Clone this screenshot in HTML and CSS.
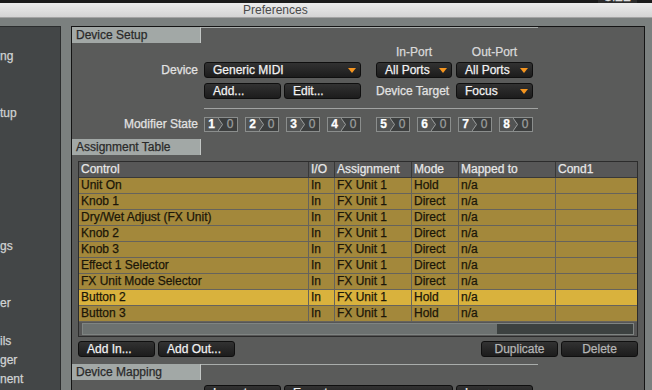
FILE: index.html
```html
<!DOCTYPE html>
<html>
<head>
<meta charset="utf-8">
<title>Preferences</title>
<link rel="stylesheet" href="styles.css">
</head>
<body>
<div class="topstrip"><span class="behind">SIZE</span></div>
<div class="titlebar">Preferences</div>
<div class="workspace">
  <nav class="sidebar">
    <div class="item">ng</div>
    <div class="item"></div>
    <div class="item"></div>
    <div class="item">tup</div>
    <div class="item"></div>
    <div class="item"></div>
    <div class="item"></div>
    <div class="item"></div>
    <div class="item"></div>
    <div class="item"></div>
    <div class="item">gs</div>
    <div class="item"></div>
    <div class="item"></div>
    <div class="item">er</div>
    <div class="item"></div>
    <div class="item">ils</div>
    <div class="item">ger</div>
    <div class="item">nent</div>
  </nav>
  <main class="panel">
    <div class="sec-head">
      <div class="sec-label">Device Setup</div>
      <div class="sec-line"></div>
    </div>
    <div class="ds">
      <div class="row ports">
        <span class="spacer-ports"></span>
        <span class="port w76">In-Port</span>
        <span class="port w77 ml4">Out-Port</span>
      </div>
      <div class="row r1">
        <span class="lbl">Device</span>
        <div class="dd w157">Generic MIDI<svg class="tri" viewBox="0 0 8 5"><polygon points="0,0 8,0 4,5"/></svg></div>
        <div class="dd w76 ml15">All Ports<svg class="tri" viewBox="0 0 8 5"><polygon points="0,0 8,0 4,5"/></svg></div>
        <div class="dd w77 ml4">All Ports<svg class="tri" viewBox="0 0 8 5"><polygon points="0,0 8,0 4,5"/></svg></div>
      </div>
      <div class="row r2">
        <span class="lbl"></span>
        <div class="btn w77">Add...</div>
        <div class="btn w77 ml3">Edit...</div>
        <span class="tlabel ml15">Device Target</span>
        <div class="dd w77 ml4">Focus<svg class="tri" viewBox="0 0 8 5"><polygon points="0,0 8,0 4,5"/></svg></div>
      </div>
      <div class="sep"></div>
      <div class="row r3">
        <span class="lbl">Modifier State</span>
        <div class="modgrp">
          <div class="mod"><span class="n">1</span><svg class="chev" viewBox="0 0 5 13"><polygon class="cf" points="0,0 0,13 5,6.5"/><polyline class="cs" points="0,0 4.5,6.5 0,13"/></svg><span class="v">0</span></div>
          <div class="mod"><span class="n">2</span><svg class="chev" viewBox="0 0 5 13"><polygon class="cf" points="0,0 0,13 5,6.5"/><polyline class="cs" points="0,0 4.5,6.5 0,13"/></svg><span class="v">0</span></div>
          <div class="mod"><span class="n">3</span><svg class="chev" viewBox="0 0 5 13"><polygon class="cf" points="0,0 0,13 5,6.5"/><polyline class="cs" points="0,0 4.5,6.5 0,13"/></svg><span class="v">0</span></div>
          <div class="mod"><span class="n">4</span><svg class="chev" viewBox="0 0 5 13"><polygon class="cf" points="0,0 0,13 5,6.5"/><polyline class="cs" points="0,0 4.5,6.5 0,13"/></svg><span class="v">0</span></div>
        </div>
        <div class="modgrp ml15">
          <div class="mod"><span class="n">5</span><svg class="chev" viewBox="0 0 5 13"><polygon class="cf" points="0,0 0,13 5,6.5"/><polyline class="cs" points="0,0 4.5,6.5 0,13"/></svg><span class="v">0</span></div>
          <div class="mod"><span class="n">6</span><svg class="chev" viewBox="0 0 5 13"><polygon class="cf" points="0,0 0,13 5,6.5"/><polyline class="cs" points="0,0 4.5,6.5 0,13"/></svg><span class="v">0</span></div>
          <div class="mod"><span class="n">7</span><svg class="chev" viewBox="0 0 5 13"><polygon class="cf" points="0,0 0,13 5,6.5"/><polyline class="cs" points="0,0 4.5,6.5 0,13"/></svg><span class="v">0</span></div>
          <div class="mod"><span class="n">8</span><svg class="chev" viewBox="0 0 5 13"><polygon class="cf" points="0,0 0,13 5,6.5"/><polyline class="cs" points="0,0 4.5,6.5 0,13"/></svg><span class="v">0</span></div>
        </div>
      </div>
    </div>

    <div class="sec-head at">
      <div class="sec-label">Assignment Table</div>
    </div>
    <div class="tbl">
      <div class="tr th"><div>Control</div><div>I/O</div><div>Assignment</div><div>Mode</div><div>Mapped to</div><div>Cond1</div></div>
      <div class="tr"><div>Unit On</div><div>In</div><div>FX Unit 1</div><div>Hold</div><div>n/a</div><div></div></div>
      <div class="tr"><div>Knob 1</div><div>In</div><div>FX Unit 1</div><div>Direct</div><div>n/a</div><div></div></div>
      <div class="tr"><div>Dry/Wet Adjust (FX Unit)</div><div>In</div><div>FX Unit 1</div><div>Direct</div><div>n/a</div><div></div></div>
      <div class="tr"><div>Knob 2</div><div>In</div><div>FX Unit 1</div><div>Direct</div><div>n/a</div><div></div></div>
      <div class="tr"><div>Knob 3</div><div>In</div><div>FX Unit 1</div><div>Direct</div><div>n/a</div><div></div></div>
      <div class="tr"><div>Effect 1 Selector</div><div>In</div><div>FX Unit 1</div><div>Direct</div><div>n/a</div><div></div></div>
      <div class="tr"><div>FX Unit Mode Selector</div><div>In</div><div>FX Unit 1</div><div>Direct</div><div>n/a</div><div></div></div>
      <div class="tr sel"><div>Button 2</div><div>In</div><div>FX Unit 1</div><div>Hold</div><div>n/a</div><div></div></div>
      <div class="tr"><div>Button 3</div><div>In</div><div>FX Unit 1</div><div>Hold</div><div>n/a</div><div></div></div>
      <div class="scroll"><div class="track"><div class="thumb"></div></div></div>
    </div>
    <div class="btns">
      <div class="grp"><div class="btn w77">Add In...</div><div class="btn w77">Add Out...</div></div>
      <div class="grp"><div class="btn w77 dim">Duplicate</div><div class="btn w77 dim">Delete</div></div>
    </div>

    <div class="sec-head dm">
      <div class="sec-label">Device Mapping</div>
      <div class="sec-line"></div>
    </div>
    <div class="dm-row">
      <div class="btn w77">Import</div>
      <div class="btn w169">Export</div>
      <div class="btn w77">Learn</div>
    </div>
  </main>
</div>
</body>
</html>
```
FILE: styles.css
```css
* { box-sizing: border-box; }
html, body {
  margin: 0;
  height: 390px;
  overflow: hidden;
}
body {
  width: 652px;
  background: #7b807f;
  font-family: "Liberation Sans", Arial, sans-serif;
  font-size: 12px;
  -webkit-text-stroke: 0.25px currentColor;
}

.topstrip {
  height: 3px;
  background: #1b1b1b;
  display: flex;
  justify-content: flex-end;
  padding-right: 15px;
  overflow: hidden;
}
.behind {
  width: 39px;
  background: #2c2c2c;
  color: #dedede;
  font-size: 12px;
  line-height: 12px;
  margin-top: -9px;
  padding-left: 6px;
  height: 12px;
}

.titlebar {
  height: 15px;
  background: linear-gradient(#ececec, #d4d4d4);
  border-bottom: 1px solid #a3a3a3;
  padding-left: 243px;
  color: #4a4a4a;
  line-height: 14px;
  font-size: 12px;
  -webkit-text-stroke: 0;
}

.workspace {
  display: flex;
  gap: 10px;
  padding-top: 8px;
  height: 374px;
}

.sidebar {
  width: 61px;
  flex: none;
  background: #434647;
  border-right: 1px solid #2b2d2e;
  border-top: 1px solid #2b2d2e;
  padding-top: 20px;
  overflow: hidden;
  color: #d0d3d3;
}
.item {
  height: 19px;
  line-height: 19px;
  white-space: nowrap;
}

.panel {
  width: 574px;
  flex: none;
  background: #5a5b5a;
  border: 1px solid #141414;
  border-bottom: 0;
}

.sec-head {
  display: flex;
  height: 16px;
}
.sec-label {
  width: 129px;
  background: #a2a8a6;
  border-right: 1px solid #c2c6c4;
  color: #2a2a2a;
  padding-left: 4px;
  line-height: 16px;
}
.sec-line {
  width: 337px;
  border-top: 1px solid #a9adab;
}

.ds { padding-top: 3px; }
.row {
  display: flex;
  align-items: center;
  height: 16px;
}
.ports {
  height: 12px;
  margin-bottom: 4px;
}
.spacer-ports { width: 304px; }
.port {
  color: #d9d9d9;
  text-align: center;
  line-height: 12px;
}
.r2 { margin-top: 5px; }
.sep {
  margin: 9px 0 0 132px;
  width: 334px;
  height: 1px;
  background: #a1a3a2;
}
.r3 { margin-top: 7px; }

.lbl {
  width: 126px;
  margin-right: 6px;
  text-align: right;
  color: #e2e2e2;
}
.tlabel {
  width: 76px;
  color: #e2e2e2;
  white-space: nowrap;
}

.w76 { width: 76px; }
.w77 { width: 77px; }
.w157 { width: 157px; }
.w169 { width: 169px; }
.ml3 { margin-left: 3px; }
.ml4 { margin-left: 4px; }
.ml15 { margin-left: 15px; }

.dd {
  height: 16px;
  display: flex;
  align-items: center;
  justify-content: space-between;
  border: 1px solid #0f0f0f;
  border-radius: 3px;
  background: linear-gradient(#323232, #1c1c1c);
  color: #f2f2f2;
  padding: 0 4px 0 8px;
  line-height: 14px;
  white-space: nowrap;
}
.tri {
  width: 8px;
  height: 5px;
  fill: #f5951f;
  flex: none;
}

.btn {
  height: 16px;
  border: 1px solid #0f0f0f;
  border-radius: 3px;
  background: linear-gradient(#323232, #1c1c1c);
  color: #f2f2f2;
  padding-left: 8px;
  line-height: 14px;
  white-space: nowrap;
}
.btn.dim {
  color: #b5b5b5;
  text-align: center;
  padding-left: 0;
}

.modgrp {
  display: flex;
  gap: 7px;
}
.mod {
  width: 34px;
  height: 15px;
  display: flex;
  border: 1px solid #8b8e8d;
  background: #3c3e3e;
}
.mod .n {
  width: 13px;
  background: #525454;
  color: #ffffff;
  font-weight: bold;
  text-align: center;
  line-height: 13px;
}
.chev {
  width: 5px;
  height: 13px;
  flex: none;
}
.chev .cf { fill: #525454; }
.chev .cs { fill: none; stroke: #9a9d9c; stroke-width: 1; }
.mod .v {
  flex: 1;
  color: #9c9e9e;
  text-align: center;
  line-height: 13px;
}

.sec-head.at { margin-top: 7px; }

.tbl {
  margin: 6px 6px 0 6px;
  border: 1px solid #2c2c2c;
  background: #565656;
}
.tr {
  display: grid;
  grid-template-columns: 230px 26px 77px 47px 97px 1fr;
  height: 16px;
  background: #a3883b;
  color: #1b1608;
}
.tr > div {
  border-right: 1px solid #66635c;
  border-bottom: 1px solid #66635c;
  padding-left: 2px;
  line-height: 15px;
  white-space: nowrap;
  overflow: hidden;
}
.tr > div:last-child { border-right: 0; }
.tr.sel { background: #d9b23d; }
.tr.th {
  background: #575757;
  color: #e8e8e8;
}
.tr.th > div {
  border-right-color: #383838;
  border-bottom-color: #383838;
}
.scroll {
  height: 14px;
  padding: 1px 3px;
}
.track {
  height: 12px;
  border: 1px solid #7f8482;
  background: #3c4140;
}
.thumb {
  width: 414px;
  height: 100%;
  background: #6c7170;
}

.btns {
  display: flex;
  justify-content: space-between;
  margin: 4px 6px 0 6px;
}
.grp {
  display: flex;
  gap: 3px;
}

.sec-head.dm { margin-top: 7px; }
.dm-row {
  display: flex;
  gap: 3px;
  margin: 5px 0 0 132px;
}
```
